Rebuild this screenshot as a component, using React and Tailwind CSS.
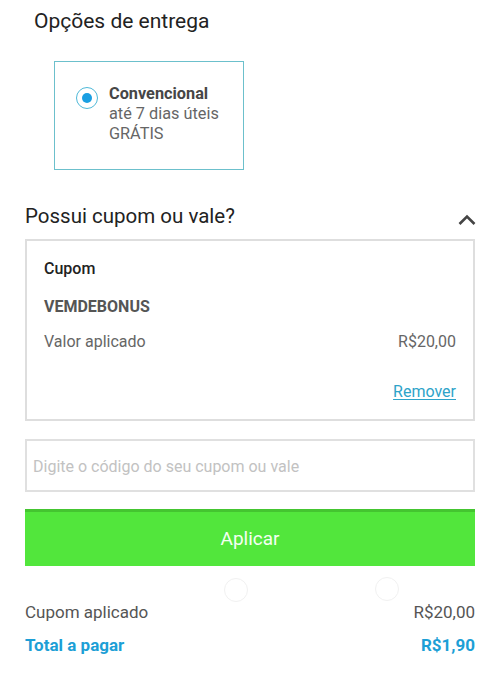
import React from "react";

function Radio() {
  return (
    <span className="mt-[2.5px] flex h-[22px] w-[22px] shrink-0 items-center justify-center rounded-full border-[1.5px] border-[#4fb9d8]">
      <span className="h-[10px] w-[10px] rounded-full bg-[#1a9fe2]" />
    </span>
  );
}

function ChevronUp() {
  return (
    <svg width="20" height="12" viewBox="0 0 20 12" className="mt-[10px]">
      <path d="M2.5 10 L10 2.5 L17.5 10" fill="none" stroke="#454545" strokeWidth="2.6" />
    </svg>
  );
}

export default function App() {
  return (
    <div className="relative h-[678px] w-[500px] overflow-hidden bg-white font-['Roboto',sans-serif]">
      {/* entrega */}
      <h1 className="pl-[34px] pt-[9px] text-[21px] leading-[24px] text-[#222]">Opções de entrega</h1>

      <div className="ml-[54px] mt-[28px] flex h-[109px] w-[190px] gap-[11px] border-[1.5px] border-[#6cc0cc] pl-[21px] pt-[22px]">
        <Radio />
        <div className="text-[16.3px] leading-[20px] text-[#666]">
          <div className="font-bold text-[#464646]">Convencional</div>
          <div>até 7 dias úteis</div>
          <div>GRÁTIS</div>
        </div>
      </div>

      {/* cupom */}
      <div className="mt-[34px] flex items-start justify-between pl-[25px] pr-[23px]">
        <h2 className="text-[20.5px] leading-[24px] text-[#222]">Possui cupom ou vale?</h2>
        <ChevronUp />
      </div>

      <div className="mx-[25px] mt-[10.5px] h-[182px] border-2 border-[#dedede] px-[17px] pt-[18px] text-[16px] leading-[20px]">
        <div className="font-medium text-[#222]">Cupom</div>
        <div className="mt-[18.4px] font-bold text-[#555]">VEMDEBONUS</div>
        <div className="mt-[15.6px] flex justify-between text-[#666]">
          <span>Valor aplicado</span>
          <span>R$20,00</span>
        </div>
        <div className="mt-[29.4px] flex justify-end">
          <a href="#" className="text-[#2ea3c9] underline underline-offset-2">Remover</a>
        </div>
      </div>

      <div className="mx-[25px] mt-[18.6px]">
        <input
          type="text"
          placeholder="Digite o código do seu cupom ou vale"
          className="h-[53px] w-full border-2 border-[#e0e0e0] pl-[6px] pt-[1px] text-[16px] text-[#333] outline-none placeholder:text-[#c2c2c2]"
        />
      </div>

      <div className="mx-[25px] mt-[17px]">
        <button className="flex h-[57px] w-full items-center justify-center bg-[#52e63c] pt-[3px] text-[19px] text-[#f4fff2] shadow-[inset_0_3px_0_#44c530]">
          Aplicar
        </button>
      </div>

      {/* resumo */}
      <div className="mt-[34.5px] px-[25px] text-[17px] leading-[22px]">
        <div className="flex justify-between text-[#555]">
          <span>Cupom aplicado</span>
          <span>R$20,00</span>
        </div>
        <div className="mt-[11.4px] flex justify-between font-bold text-[#1d9fd6]">
          <span>Total a pagar</span>
          <span>R$1,90</span>
        </div>
      </div>

      {/* faint touch rings */}
      <span className="absolute left-[224px] top-[578px] h-[24px] w-[24px] rounded-full border border-[#f1f1f1]" />
      <span className="absolute left-[375px] top-[577px] h-[24px] w-[24px] rounded-full border border-[#f1f1f1]" />
    </div>
  );
}
